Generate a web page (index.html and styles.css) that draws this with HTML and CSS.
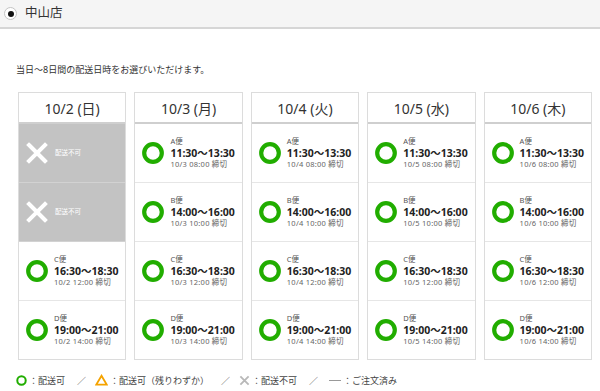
FILE: index.html
```html
<!DOCTYPE html>
<html lang="ja">
<head>
<meta charset="utf-8">
<link rel="stylesheet" href="styles.css">
</head>
<body>
<div class="store-bar"><span class="radio"></span><span class="store-name">中山店</span></div>
<p class="intro">当日～8日間の配送日時をお選びいただけます。</p>
<div class="calendar">
  <div class="day">
    <div class="day-head">10/2 (日)</div>
    <div class="slot closed"><svg class="icon" viewBox="0 0 22 22"><path d="M3 3L19 19M19 3L3 19" stroke="#fff" stroke-width="4" stroke-linecap="square" fill="none"/></svg><span class="closed-text">配送不可</span></div>
    <div class="slot closed"><svg class="icon" viewBox="0 0 22 22"><path d="M3 3L19 19M19 3L3 19" stroke="#fff" stroke-width="4" stroke-linecap="square" fill="none"/></svg><span class="closed-text">配送不可</span></div>
    <div class="slot"><svg class="icon" viewBox="0 0 22 22"><circle cx="11" cy="11" r="8.8" stroke="#21ad00" stroke-width="4.2" fill="none"/></svg><div class="info"><div class="label">C便</div><div class="time">16:30～18:30</div><div class="deadline">10/2 12:00 締切</div></div></div>
    <div class="slot"><svg class="icon" viewBox="0 0 22 22"><circle cx="11" cy="11" r="8.8" stroke="#21ad00" stroke-width="4.2" fill="none"/></svg><div class="info"><div class="label">D便</div><div class="time">19:00～21:00</div><div class="deadline">10/2 14:00 締切</div></div></div>
  </div>
  <div class="day">
    <div class="day-head">10/3 (月)</div>
    <div class="slot"><svg class="icon" viewBox="0 0 22 22"><circle cx="11" cy="11" r="8.8" stroke="#21ad00" stroke-width="4.2" fill="none"/></svg><div class="info"><div class="label">A便</div><div class="time">11:30～13:30</div><div class="deadline">10/3 08:00 締切</div></div></div>
    <div class="slot"><svg class="icon" viewBox="0 0 22 22"><circle cx="11" cy="11" r="8.8" stroke="#21ad00" stroke-width="4.2" fill="none"/></svg><div class="info"><div class="label">B便</div><div class="time">14:00～16:00</div><div class="deadline">10/3 10:00 締切</div></div></div>
    <div class="slot"><svg class="icon" viewBox="0 0 22 22"><circle cx="11" cy="11" r="8.8" stroke="#21ad00" stroke-width="4.2" fill="none"/></svg><div class="info"><div class="label">C便</div><div class="time">16:30～18:30</div><div class="deadline">10/3 12:00 締切</div></div></div>
    <div class="slot"><svg class="icon" viewBox="0 0 22 22"><circle cx="11" cy="11" r="8.8" stroke="#21ad00" stroke-width="4.2" fill="none"/></svg><div class="info"><div class="label">D便</div><div class="time">19:00～21:00</div><div class="deadline">10/3 14:00 締切</div></div></div>
  </div>
  <div class="day">
    <div class="day-head">10/4 (火)</div>
    <div class="slot"><svg class="icon" viewBox="0 0 22 22"><circle cx="11" cy="11" r="8.8" stroke="#21ad00" stroke-width="4.2" fill="none"/></svg><div class="info"><div class="label">A便</div><div class="time">11:30～13:30</div><div class="deadline">10/4 08:00 締切</div></div></div>
    <div class="slot"><svg class="icon" viewBox="0 0 22 22"><circle cx="11" cy="11" r="8.8" stroke="#21ad00" stroke-width="4.2" fill="none"/></svg><div class="info"><div class="label">B便</div><div class="time">14:00～16:00</div><div class="deadline">10/4 10:00 締切</div></div></div>
    <div class="slot"><svg class="icon" viewBox="0 0 22 22"><circle cx="11" cy="11" r="8.8" stroke="#21ad00" stroke-width="4.2" fill="none"/></svg><div class="info"><div class="label">C便</div><div class="time">16:30～18:30</div><div class="deadline">10/4 12:00 締切</div></div></div>
    <div class="slot"><svg class="icon" viewBox="0 0 22 22"><circle cx="11" cy="11" r="8.8" stroke="#21ad00" stroke-width="4.2" fill="none"/></svg><div class="info"><div class="label">D便</div><div class="time">19:00～21:00</div><div class="deadline">10/4 14:00 締切</div></div></div>
  </div>
  <div class="day">
    <div class="day-head">10/5 (水)</div>
    <div class="slot"><svg class="icon" viewBox="0 0 22 22"><circle cx="11" cy="11" r="8.8" stroke="#21ad00" stroke-width="4.2" fill="none"/></svg><div class="info"><div class="label">A便</div><div class="time">11:30～13:30</div><div class="deadline">10/5 08:00 締切</div></div></div>
    <div class="slot"><svg class="icon" viewBox="0 0 22 22"><circle cx="11" cy="11" r="8.8" stroke="#21ad00" stroke-width="4.2" fill="none"/></svg><div class="info"><div class="label">B便</div><div class="time">14:00～16:00</div><div class="deadline">10/5 10:00 締切</div></div></div>
    <div class="slot"><svg class="icon" viewBox="0 0 22 22"><circle cx="11" cy="11" r="8.8" stroke="#21ad00" stroke-width="4.2" fill="none"/></svg><div class="info"><div class="label">C便</div><div class="time">16:30～18:30</div><div class="deadline">10/5 12:00 締切</div></div></div>
    <div class="slot"><svg class="icon" viewBox="0 0 22 22"><circle cx="11" cy="11" r="8.8" stroke="#21ad00" stroke-width="4.2" fill="none"/></svg><div class="info"><div class="label">D便</div><div class="time">19:00～21:00</div><div class="deadline">10/5 14:00 締切</div></div></div>
  </div>
  <div class="day">
    <div class="day-head">10/6 (木)</div>
    <div class="slot"><svg class="icon" viewBox="0 0 22 22"><circle cx="11" cy="11" r="8.8" stroke="#21ad00" stroke-width="4.2" fill="none"/></svg><div class="info"><div class="label">A便</div><div class="time">11:30～13:30</div><div class="deadline">10/6 08:00 締切</div></div></div>
    <div class="slot"><svg class="icon" viewBox="0 0 22 22"><circle cx="11" cy="11" r="8.8" stroke="#21ad00" stroke-width="4.2" fill="none"/></svg><div class="info"><div class="label">B便</div><div class="time">14:00～16:00</div><div class="deadline">10/6 10:00 締切</div></div></div>
    <div class="slot"><svg class="icon" viewBox="0 0 22 22"><circle cx="11" cy="11" r="8.8" stroke="#21ad00" stroke-width="4.2" fill="none"/></svg><div class="info"><div class="label">C便</div><div class="time">16:30～18:30</div><div class="deadline">10/6 12:00 締切</div></div></div>
    <div class="slot"><svg class="icon" viewBox="0 0 22 22"><circle cx="11" cy="11" r="8.8" stroke="#21ad00" stroke-width="4.2" fill="none"/></svg><div class="info"><div class="label">D便</div><div class="time">19:00～21:00</div><div class="deadline">10/6 14:00 締切</div></div></div>
  </div>
</div>
<div class="legend">
  <svg class="legend-icon" viewBox="0 0 12 12"><circle cx="6" cy="6" r="4.6" stroke="#21ad00" stroke-width="2.2" fill="none"/></svg>
  <span class="legend-text">：配送可</span>
  <span class="sep">／</span>
  <svg class="legend-icon tri" viewBox="0 0 14 12"><path d="M7 1.5L12.6 11H1.4Z" stroke="#f5a300" stroke-width="2" fill="none" stroke-linejoin="miter"/></svg>
  <span class="legend-text">：配送可（残りわずか）</span>
  <span class="sep">／</span>
  <svg class="legend-icon" viewBox="0 0 12 12"><path d="M1.5 1.5L10.5 10.5M10.5 1.5L1.5 10.5" stroke="#b8b8b8" stroke-width="2" fill="none"/></svg>
  <span class="legend-text">：配送不可</span>
  <span class="sep">／</span>
  <span class="dash"></span>
  <span class="legend-text">：ご注文済み</span>
</div>
</body>
</html>
```
FILE: styles.css
```css
* { box-sizing: border-box; }
html, body { margin: 0; padding: 0; background: #fff; }
body {
  font-family: "Noto Sans", "Noto Sans CJK JP", sans-serif;
  color: #333;
  width: 600px;
  height: 391px;
  overflow: hidden;
}
.store-bar {
  height: 29px;
  background: #f5f5f5;
  border-bottom: 2px solid #d6d6d6;
  display: flex;
  align-items: center;
  padding-left: 4px;
}
.radio {
  width: 13px;
  height: 13px;
  border-radius: 50%;
  border: 1px solid #c4c4c4;
  background: #fff;
  display: flex;
  align-items: center;
  justify-content: center;
}
.radio::after {
  content: "";
  width: 6px;
  height: 6px;
  border-radius: 50%;
  background: #111;
}
.store-name {
  margin-left: 8px;
  font-size: 12.5px;
  color: #333;
  line-height: 1;
}
.intro {
  margin: 35px 0 0 16px;
  font-size: 9px;
  line-height: 12px;
  height: 12px;
  color: #333;
}
.calendar {
  margin: 16px 0 0 18px;
  width: 574px;
  display: grid;
  grid-template-columns: repeat(5, 1fr);
  column-gap: 8px;
}
.day {
  border: 1px solid #dcdcdc;
  border-bottom: 0;
}
.day-head {
  height: 31px;
  border-bottom: 2px solid #cfcfcf;
  display: flex;
  align-items: center;
  justify-content: center;
  font-size: 14px;
  color: #333;
}
.slot {
  height: 59px;
  border-bottom: 1px solid #e6e6e6;
  display: flex;
  align-items: center;
  padding-left: 7px;
}
.slot:last-child { border-bottom-color: #dcdcdc; }
.slot.closed {
  background: #c3c3c3;
  border-bottom-color: #d2d2d2;
}
.icon {
  width: 22px;
  height: 22px;
  flex: none;
}
.closed-text {
  margin-left: 7px;
  font-size: 6.5px;
  line-height: 8px;
  color: #fff;
}
.info {
  margin-left: 6px;
  display: flex;
  flex-direction: column;
}
.label {
  font-size: 7.5px;
  line-height: 11px;
  color: #555;
}
.time {
  font-size: 10.5px;
  line-height: 12px;
  font-weight: 700;
  color: #222;
}
.deadline {
  font-size: 7.5px;
  line-height: 11px;
  letter-spacing: 0.25px;
  color: #666;
}
.legend {
  margin: 13px 0 0 16px;
  display: flex;
  align-items: center;
  height: 14px;
  font-size: 9px;
  color: #444;
}
.legend-icon {
  width: 11px;
  height: 11px;
  flex: none;
}
.legend-icon.tri {
  width: 13px;
  height: 12px;
}
.legend-text { margin-left: 2px; }
.sep {
  margin: 0 9px 0 12px;
  color: #555;
}
.dash {
  width: 12px;
  height: 1px;
  background: #999;
  margin-left: 2px;
}
```
